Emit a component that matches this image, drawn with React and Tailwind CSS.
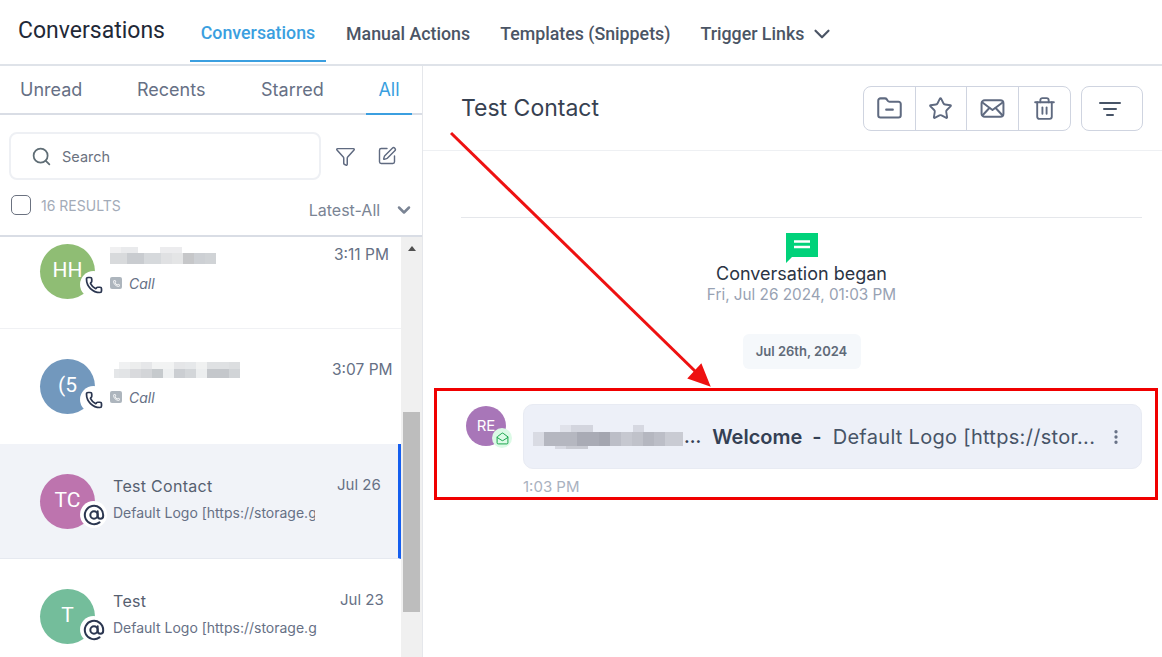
import { AtSign, ChevronDown, Filter, FolderMinus, MailOpen, MoreVertical, Phone, Search, SquarePen, Star, Trash2 } from 'lucide-react';

const inter = { fontFamily: 'Inter, "Liberation Sans", sans-serif' };

// pixelated blur over contact names, every row is a list of [width, colour]
function Blur({ rows, className }) {
    return (
        <div className={className}>
            {rows.map((row, r) => (
                <div key={r} className="flex" style={{ height: row.h }}>
                    {row.cells.map(([w, c], i) => (
                        <div key={i} className="h-full shrink-0" style={{ width: w, backgroundColor: c }}></div>
                    ))}
                </div>
            ))}
        </div>
    );
}

function Avatar({ initials, color, icon }) {
    return (
        <div className="relative shrink-0 w-[55px] h-[55px] rounded-full flex items-center justify-center text-white text-[21px] font-['Roboto']" style={{ backgroundColor: color }}>
            <span className="mb-[2px]">{initials}</span>
            <div className="absolute left-[40px] top-[27px] w-[27px] h-[27px] rounded-full bg-white flex items-center justify-center text-[#2b3650]">
                {icon === 'call' ? <Phone size={18} strokeWidth={2.3} /> : <AtSign size={22} strokeWidth={2.2} />}
            </div>
        </div>
    );
}

function CallLine() {
    return (
        <div className="flex items-center gap-[7px] mt-[12px] h-[14px]">
            <div className="w-[12px] h-[12px] rounded-[2px] bg-[#adb5bd] flex items-center justify-center text-white">
                <Phone size={7} strokeWidth={3} />
            </div>
            <span className="text-[14px] italic text-[#667085]">Call</span>
        </div>
    );
}

function IconButton({ children, last }) {
    return (
        <div className={`w-[52px] h-full flex items-center justify-center text-[#5f6a80] ${last ? '' : 'border-r border-[#cfd4e0]'}`}>
            {children}
        </div>
    );
}

export default function App() {
    return (
        <div className="relative w-[1162px] h-[657px] overflow-hidden bg-white" style={inter}>
            {/* top bar */}
            <div className="h-[66px] flex border-b-2 border-[#dfe3e9] font-['Roboto']">
                <div className="w-[190px] pl-[18px] pt-[17px] text-[23px] leading-[28px] text-[#1f2937]">Conversations</div>
                <div className="w-[136px] h-[62px] border-b-2 border-[#3b9fe0] text-center pt-[22px] text-[17.8px] leading-[22px] font-medium text-[#3b9fe0]">Conversations</div>
                <div className="pl-[20px] pt-[23px] text-[17.8px] leading-[22px] font-medium text-[#4b5565]">Manual Actions</div>
                <div className="pl-[30px] pt-[23px] text-[17.8px] leading-[22px] font-medium text-[#4b5565]">Templates (Snippets)</div>
                <div className="pl-[30px] pt-[23px] text-[17.8px] leading-[22px] font-medium text-[#4b5565] flex items-start gap-[5px]">
                    Trigger Links
                    <ChevronDown size={26} strokeWidth={2} className="mt-[-2px] text-[#4b5565]" />
                </div>
            </div>

            <div className="flex h-[591px]">
                {/* left panel */}
                <div className="w-[423px] shrink-0 border-r border-[#e5e7eb] flex flex-col">
                    <div className="h-[49px] flex border-b-2 border-[#d9dde5] text-[18px] leading-[26px] text-[#667085]">
                        <div className="w-[137px] pl-[20px] pt-[11px]">Unread</div>
                        <div className="w-[124px] pt-[11px]">Recents</div>
                        <div className="w-[105px] pt-[11px]">Starred</div>
                        <div className="w-[46px] h-[49px] border-b-2 border-[#3b9fe0] text-center pt-[11px] text-[#3b9fe0]">All</div>
                    </div>

                    <div className="flex items-center pl-[9px] mt-[17px]">
                        <div className="w-[312px] h-[48px] rounded-[8px] border-2 border-[#eef0f4] flex items-center pl-[20px] gap-[10px]">
                            <Search size={21} className="text-[#5f6d75]" />
                            <span className="text-[14.5px] mt-[1px] text-[#6b7280]">Search</span>
                        </div>
                        <Filter size={21} strokeWidth={1.7} className="ml-[14px] text-[#5f6a80]" />
                        <SquarePen size={20} strokeWidth={1.7} className="ml-[21px] text-[#5f6a80]" />
                    </div>

                    <div className="h-[57px] flex border-b-2 border-[#d9dde5]">
                        <div className="w-[20px] h-[20px] ml-[11px] mt-[15px] rounded-[5px] border-[1.5px] border-[#6b7280]"></div>
                        <div className="ml-[10px] mt-[17px] text-[14px] leading-[17px] text-[#a3abb8]">16 RESULTS</div>
                        <div className="ml-[188px] mt-[20px] text-[16px] leading-[20px] text-[#7a8494] whitespace-nowrap">Latest-All</div>
                        <ChevronDown size={20} strokeWidth={3} className="ml-[14px] mt-[20px] text-[#7a8494] shrink-0" />
                    </div>

                    <div className="flex-1 flex min-h-0">
                        <div className="w-[401px] shrink-0">
                            <div className="h-[92px] border-b border-[#f0f1f4] pl-[40px] pt-[7px] flex">
                                <Avatar initials="HH" color="#8fbd74" icon="call" />
                                <div className="ml-[15px] w-[224px] shrink-0">
                                    <Blur
                                        className="h-[17px] mt-[3px]"
                                        rows={[
                                            { h: 6, cells: [[11, '#f0f0f1'], [17, '#e9eaec'], [22, '#ffffff'], [22, '#ececee'], [34, '#ffffff']] },
                                            { h: 11, cells: [[17, '#d8dadc'], [17, '#c9ccd0'], [17, '#d6d9dc'], [11, '#e0e1e3'], [11, '#e4e5e6'], [11, '#c6c7c9'], [11, '#cdd0d4'], [11, '#d0d3d6']] },
                                        ]}
                                    />
                                    <CallLine />
                                </div>
                                <div className="mt-[2px] text-[15.5px] leading-[18px] text-[#667085] whitespace-nowrap">3:11 PM</div>
                            </div>
                            <div className="h-[115px] pl-[40px] pt-[30px] flex">
                                <Avatar initials="(5" color="#7298bd" icon="call" />
                                <div className="ml-[15px] w-[222px] shrink-0">
                                    <Blur
                                        className="h-[16px] mt-[3px]"
                                        rows={[
                                            { h: 7, cells: [[9, '#ffffff'], [11, '#f0f1f2'], [11, '#eceded'], [11, '#e6e7e9'], [22, '#f2f3f3'], [11, '#e5e6e8'], [11, '#e6e8ea'], [11, '#f0f1f1'], [22, '#dfe1e3'], [11, '#dcdee0']] },
                                            { h: 9, cells: [[4, '#ffffff'], [5, '#e4e6e8'], [11, '#e2e4e6'], [11, '#d9dadd'], [11, '#d3d5d8'], [11, '#c6cacd'], [11, '#eef0f1'], [11, '#cbced2'], [11, '#d3d6d9'], [11, '#eceeef'], [22, '#c4c7cb'], [11, '#d1d4d7']] },
                                        ]}
                                    />
                                    <CallLine />
                                </div>
                                <div className="mt-[2px] text-[15.5px] leading-[18px] text-[#667085] whitespace-nowrap">3:07 PM</div>
                            </div>
                            <div className="h-[115px] pl-[40px] pt-[30px] flex bg-[#f1f3f8] border-r-[3px] border-b border-r-[#155eef] border-b-[#e6e9f0]">
                                <Avatar initials="TC" color="#bd74ae" icon="at" />
                                <div className="ml-[18px] w-[202px] shrink-0">
                                    <div className="text-[16px] leading-[20px] tracking-[0.3px] text-[#566070] mt-[2px]">Test Contact</div>
                                    <div className="text-[14px] leading-[18px] text-[#667085] mt-[8px] overflow-hidden whitespace-nowrap">Default Logo [https://storage.g</div>
                                </div>
                                <div className="ml-[22px] mt-[2px] text-[15px] leading-[18px] text-[#667085] whitespace-nowrap">Jul 26</div>
                            </div>
                            <div className="h-[100px] pl-[40px] pt-[30px] flex">
                                <Avatar initials="T" color="#74bd9b" icon="at" />
                                <div className="ml-[18px] w-[206px] shrink-0">
                                    <div className="text-[16px] leading-[20px] tracking-[0.3px] text-[#566070] mt-[2px]">Test</div>
                                    <div className="text-[14px] leading-[18px] text-[#667085] mt-[8px] overflow-hidden whitespace-nowrap">Default Logo [https://storage.g</div>
                                </div>
                                <div className="ml-[21px] mt-[2px] text-[15px] leading-[18px] text-[#667085] whitespace-nowrap">Jul 23</div>
                            </div>
                        </div>
                        <div className="w-[21px] bg-[#f0f0f0] flex flex-col items-center">
                            <div className="mt-[9px] w-0 h-0 border-l-[4px] border-r-[4px] border-b-[5px] border-l-transparent border-r-transparent border-b-[#505050]"></div>
                            <div className="mt-[161px] w-[17px] h-[200px] bg-[#bdbdbd]"></div>
                        </div>
                    </div>
                </div>

                {/* right panel */}
                <div className="flex-1 min-w-0">
                    <div className="h-[85px] border-b border-[#eef0f3] flex items-start pl-[38px]">
                        <div className="mt-[28px] text-[23px] leading-[28px] text-[#374151] w-[402px]">Test Contact</div>
                        <div className="mt-[20px] w-[208px] h-[45px] rounded-[8px] border border-[#cfd4e0] flex">
                            <IconButton><FolderMinus size={27} strokeWidth={1.8} /></IconButton>
                            <IconButton><Star size={25} strokeWidth={1.8} /></IconButton>
                            <IconButton>
                                <svg width="25" height="25" viewBox="0 0 24 24" fill="none" stroke="currentColor" strokeWidth="1.9" strokeLinecap="round" strokeLinejoin="round">
                                    <rect x="1.5" y="4" width="21" height="16" rx="3" />
                                    <path d="M2 6l10 7.5L22 6" />
                                    <path d="M2.5 18.5L9 11.5M21.5 18.5L15 11.5" />
                                </svg>
                            </IconButton>
                            <IconButton last><Trash2 size={25} strokeWidth={1.8} /></IconButton>
                        </div>
                        <div className="mt-[20px] ml-[10px] w-[62px] h-[45px] pr-[5px] rounded-[8px] border border-[#cfd4e0] flex items-center justify-center text-[#475467]">
                            <svg width="22" height="16" viewBox="0 0 22 16" fill="none" stroke="currentColor" strokeWidth="2" strokeLinecap="round">
                                <path d="M1 2h20M5 8h12M8 14h6" />
                            </svg>
                        </div>
                    </div>

                    <div className="mx-[38px] mt-[66px] border-t border-[#e5e7eb] pt-[15px] w-[681px] flex flex-col items-center">
                        <svg width="32" height="30" viewBox="0 0 32 30" className="text-[#00d27a]">
                            <path d="M0 0h32v24H6l-6 6z" fill="currentColor" />
                            <path d="M8 8.5h16M8 14h16" stroke="#fff" strokeWidth="2.4" />
                        </svg>
                        <div className="text-[18px] leading-[20px] mt-[1px] text-[#2b3444] whitespace-nowrap">Conversation began</div>
                        <div className="text-[15.3px] leading-[18px] mt-[2px] text-[#98a2b3] whitespace-nowrap">Fri, Jul 26 2024, 01:03 PM</div>
                        <div className="mt-[30px] w-[118px] h-[35px] rounded-[6px] bg-[#f5f8fb] flex items-center justify-center text-[13px] font-semibold text-[#5f6a78]">Jul 26th, 2024</div>
                    </div>

                    <div className="flex mt-[35px] pl-[43px]">
                        <div className="relative shrink-0 w-[40px] h-[40px] mt-[2px] rounded-full bg-[#a876b8] flex items-center justify-center text-white text-[15px]">
                            RE
                            <div className="absolute left-[26px] top-[22px] w-[20px] h-[20px] rounded-full bg-[#dcfae6] flex items-center justify-center text-[#17a34a]">
                                <MailOpen size={13} strokeWidth={1.8} />
                            </div>
                        </div>
                        <div className="ml-[17px]">
                            <div className="w-[619px] h-[65px] rounded-[10px] bg-[#edf0f8] border border-[#e8ebf3] flex items-center pl-[9px] text-[20px] whitespace-nowrap">
                                <Blur
                                    className="w-[150px] shrink-0"
                                    rows={[
                                        { h: 7, cells: [[27, '#edf0f8'], [11, '#e0e2ea'], [22, '#d3d5de'], [40, '#edf0f8'], [11, '#d6d8e1'], [39, '#edf0f8']] },
                                        { h: 14, cells: [[11, '#d9dbe3'], [33, '#b5b7c0'], [22, '#a9abb5'], [11, '#a4a6b0'], [11, '#bcbec7'], [11, '#c6c8d0'], [11, '#c0c2ca'], [11, '#b5b7c0'], [11, '#bcbec7'], [18, '#c9cbd3']] },
                                        { h: 3, cells: [[22, '#edf0f8'], [11, '#d6d8e1'], [22, '#c9cbd3'], [95, '#edf0f8']] },
                                    ]}
                                />
                                <span className="ml-[1px] text-[18px] font-semibold text-[#344054]">...</span>
                                <span className="ml-[11px] font-semibold text-[#344054]">Welcome</span>
                                <span className="ml-[10px] font-semibold text-[#344054]">-</span>
                                <span className="ml-[11px] text-[#475467] tracking-[0.3px]">Default Logo [https://stor...</span>
                                <MoreVertical size={18} strokeWidth={2.4} className="ml-[12px] text-[#667085] shrink-0" />
                            </div>
                            <div className="mt-[9px] text-[15px] leading-[18px] text-[#aab2bf]">1:03 PM</div>
                        </div>
                    </div>
                </div>
            </div>

            {/* red annotation */}
            <div className="absolute left-[434px] top-[388px] w-[724px] h-[112px] border-[3px] border-[#f00000]"></div>
            <svg className="absolute left-[445px] top-[128px]" width="270" height="262" viewBox="0 0 270 262" fill="none">
                <path d="M6 5L252 245" stroke="#ee1111" strokeWidth="3" />
                <path d="M264 257L244 250L256 237z" fill="#ee1111" stroke="#ee1111" strokeWidth="2" />
            </svg>
        </div>
    );
}
